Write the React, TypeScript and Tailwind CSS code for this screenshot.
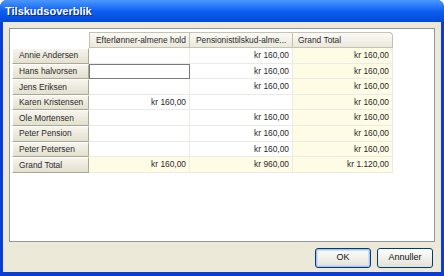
import React from "react";

const font = { fontFamily: '"Liberation Sans", Arial, sans-serif' };

const names = [
  "Annie Andersen",
  "Hans halvorsen",
  "Jens Eriksen",
  "Karen Kristensen",
  "Ole Mortensen",
  "Peter Pension",
  "Peter Petersen",
];
const col1 = ["", "EDIT", "", "kr 160,00", "", "", ""];
const col2 = ["kr 160,00", "kr 160,00", "kr 160,00", "", "kr 160,00", "kr 160,00", "kr 160,00"];

function RowHeader({ children }: { children: React.ReactNode }) {
  return (
    <div className="h-[15.6px] flex items-center pl-[6px] bg-gradient-to-b from-[#f6f4ec] to-[#e4e0cf] border-t border-l border-t-white border-l-white border-r border-b border-r-[#aba796] border-b-[#aba796] rounded-[1px] text-[#2a2a2a] whitespace-nowrap overflow-hidden">
      {children}
    </div>
  );
}

function Cell({ children, yellow }: { children?: React.ReactNode; yellow?: boolean }) {
  return (
    <div
      className={`h-[15.6px] flex items-center justify-end pr-[3px] border-r border-b border-r-[#ebeae4] border-b-[#ebeae4] text-[#2a2a2a] whitespace-nowrap ${
        yellow ? "bg-[#fffce6]" : "bg-white"
      }`}
    >
      {children}
    </div>
  );
}

export default function App() {
  return (
    <div className="w-[444px] h-[276px] bg-white" style={font}>
      <div className="w-full h-full flex flex-col rounded-t-[7px] overflow-hidden bg-[#0a3cd6]">
        <div className="h-[22px] flex items-center pl-[5px] bg-gradient-to-b from-[#4a98ff] via-[#0d5ff0] to-[#0349d6] text-white font-bold text-[11px] shrink-0">
          <span className="[text-shadow:1px_1px_0_#0b2a8a]">Tilskudsoverblik</span>
        </div>
        <div className="flex-1 mx-[3px] mb-[4px] bg-[#ece9d8] flex flex-col text-[8.4px]">
          <div className="mt-[6px] mx-[6px] h-[214px] border border-[#8f96a3] bg-white pt-[3px] pl-[2px]">
            <div className="flex">
              <div className="w-[77px] flex flex-col">
                <div className="h-[16px]" />
                {names.map((n) => (
                  <RowHeader key={n}>{n}</RowHeader>
                ))}
                <RowHeader>Grand Total</RowHeader>
              </div>
              <div className="flex flex-col">
                <div className="h-[16px] flex border-t border-r border-b border-[#c6c2b0] rounded-tr-[4px] bg-gradient-to-b from-[#fbfaf6] to-[#ebe8dc] text-[#2a2a2a] overflow-hidden">
                  <div className="w-[101px] pl-[6px] flex items-center border-l border-r border-[#c6c2b0] whitespace-nowrap">Efterlønner-almene hold</div>
                  <div className="w-[103px] pl-[6px] flex items-center border-r border-[#c6c2b0] whitespace-nowrap">Pensionisttilskud-alme...</div>
                  <div className="w-[99px] pl-[5px] flex items-center whitespace-nowrap">Grand Total</div>
                </div>
                <div className="flex">
                  <div className="w-[101px] flex flex-col">
                    {col1.map((v, i) =>
                      v === "EDIT" ? (
                        <div key={i} className="h-[15.6px] border border-[#7a7a7a] bg-white" />
                      ) : (
                        <Cell key={i}>{v}</Cell>
                      )
                    )}
                    <Cell yellow>kr 160,00</Cell>
                  </div>
                  <div className="w-[103px] flex flex-col">
                    {col2.map((v, i) => (
                      <Cell key={i}>{v}</Cell>
                    ))}
                    <Cell yellow>kr 960,00</Cell>
                  </div>
                  <div className="w-[100px] flex flex-col">
                    {names.map((n) => (
                      <Cell key={n} yellow>kr 160,00</Cell>
                    ))}
                    <Cell yellow>kr 1.120,00</Cell>
                  </div>
                </div>
              </div>
            </div>
          </div>
          <div className="flex justify-end gap-[6px] mr-[8px] mt-[6px]">
            <button className="w-[56px] h-[20px] rounded-[3px] border border-[#003c74] bg-gradient-to-b from-white to-[#e3e1d6] text-[#111] text-[9px] shadow-[inset_0_0_0_1px_#a9c2f3,inset_0_0_0_2px_#cfdcf8] flex items-center justify-center">
              OK
            </button>
            <button className="w-[56px] h-[20px] rounded-[3px] border border-[#003c74] bg-gradient-to-b from-white to-[#e3e1d6] text-[#111] text-[9px] flex items-center justify-center">
              Annuller
            </button>
          </div>
        </div>
      </div>
    </div>
  );
}
